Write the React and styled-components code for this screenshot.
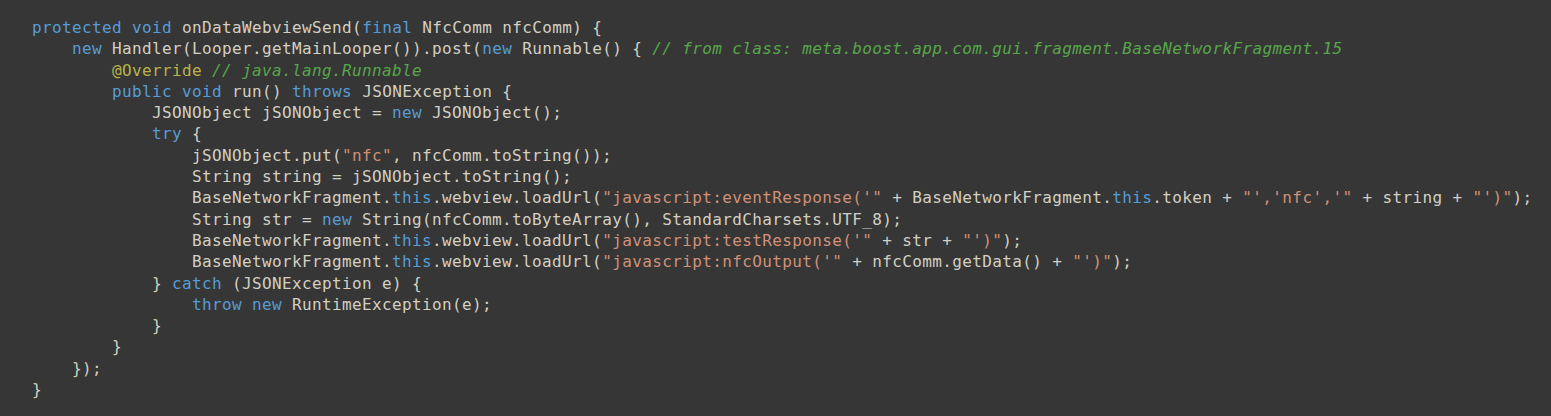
import { createGlobalStyle, styled } from 'styled-components';

const GlobalStyle = createGlobalStyle`
  html, body {
    margin: 0;
    padding: 0;
    background: #363636;
  }
`;

const Editor = styled.div`
  box-sizing: border-box;
  width: 1551px;
  height: 416px;
  padding: 17px 0 0 32px;
  background: #363636;
  overflow: hidden;
`;

const Line = styled.div`
  height: 21.3px;
  line-height: 21.3px;
  padding-left: ${(p) => p.$indent * 40}px;
  font-family: 'DejaVu Sans Mono', 'Liberation Mono', monospace;
  font-size: 16px;
  letter-spacing: 0.37px;
  white-space: pre;
  color: #d2cfc3;
`;

const Kw = styled.span`
  color: #569cd6;
`;
const Str = styled.span`
  color: #ce9178;
`;
const Comment = styled.span`
  color: #57a64a;
  font-style: italic;
`;
const Annotation = styled.span`
  color: #b8b34a;
`;

const K = ({ children }) => <Kw>{children}</Kw>;
const S = ({ children }) => <Str>{children}</Str>;

const code = [
  [0, <><K>protected</K> <K>void</K> onDataWebviewSend(<K>final</K> NfcComm nfcComm) {'{'}</>],
  [1, <><K>new</K> Handler(Looper.getMainLooper()).post(<K>new</K> Runnable() {'{'} <Comment>// from class: meta.boost.app.com.gui.fragment.BaseNetworkFragment.15</Comment></>],
  [2, <><Annotation>@Override</Annotation> <Comment>// java.lang.Runnable</Comment></>],
  [2, <><K>public</K> <K>void</K> run() <K>throws</K> JSONException {'{'}</>],
  [3, <>JSONObject jSONObject = <K>new</K> JSONObject();</>],
  [3, <><K>try</K> {'{'}</>],
  [4, <>jSONObject.put(<S>"nfc"</S>, nfcComm.toString());</>],
  [4, <>String string = jSONObject.toString();</>],
  [4, <>BaseNetworkFragment.<K>this</K>.webview.loadUrl(<S>"javascript:eventResponse('"</S> + BaseNetworkFragment.<K>this</K>.token + <S>"','nfc','"</S> + string + <S>"')"</S>);</>],
  [4, <>String str = <K>new</K> String(nfcComm.toByteArray(), StandardCharsets.UTF_8);</>],
  [4, <>BaseNetworkFragment.<K>this</K>.webview.loadUrl(<S>"javascript:testResponse('"</S> + str + <S>"')"</S>);</>],
  [4, <>BaseNetworkFragment.<K>this</K>.webview.loadUrl(<S>"javascript:nfcOutput('"</S> + nfcComm.getData() + <S>"')"</S>);</>],
  [3, <>{'}'} <K>catch</K> (JSONException e) {'{'}</>],
  [4, <><K>throw</K> <K>new</K> RuntimeException(e);</>],
  [3, <>{'}'}</>],
  [2, <>{'}'}</>],
  [1, <>{'});'}</>],
  [0, <>{'}'}</>],
];

const App = () => {
  return (
    <>
      <GlobalStyle />
      <Editor>
        {code.map(([indent, content], i) => (
          <Line key={i} $indent={indent}>
            {content}
          </Line>
        ))}
      </Editor>
    </>
  );
};

export default App;
